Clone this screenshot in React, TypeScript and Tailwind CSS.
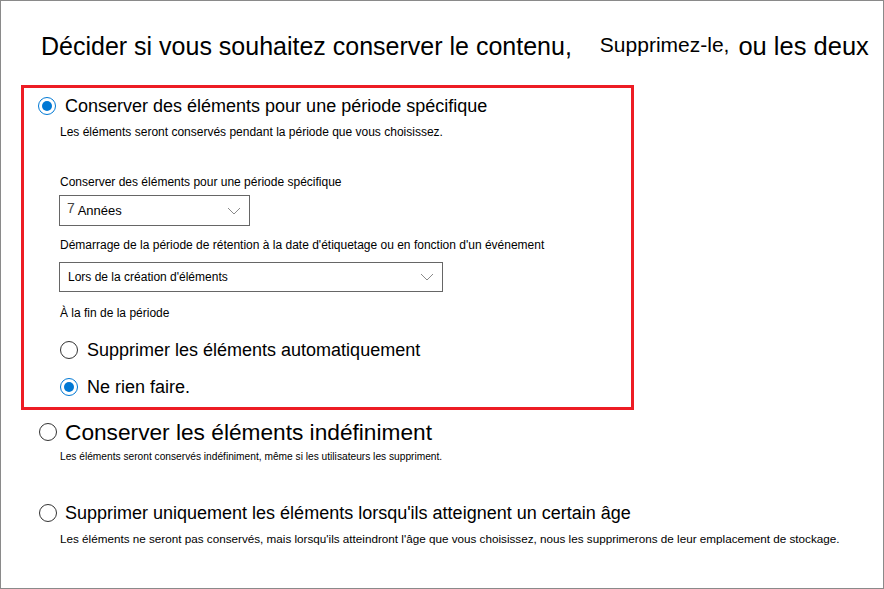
import React from 'react';

const font = { fontFamily: '"Liberation Sans", Arial, sans-serif' };

const Radio: React.FC = () => (
  <span className="flex h-[18px] w-[18px] shrink-0 items-center justify-center rounded-full border border-[#333] bg-white" />
);

const RadioChecked: React.FC = () => (
  <span className="flex h-[18px] w-[18px] shrink-0 items-center justify-center rounded-full border border-[#0078d4] bg-white">
    <span className="h-[10px] w-[10px] rounded-full bg-[#0078d4]" />
  </span>
);

const Chevron: React.FC = () => (
  <svg width="14" height="8" viewBox="0 0 14 8" fill="none" className="shrink-0">
    <path d="M1 1l6 6 6-6" stroke="#8a8a8a" strokeWidth="1" />
  </svg>
);

export default function App() {
  return (
    <div className="h-[589px] w-[884px] overflow-hidden border border-[#8a8a8a] bg-white text-black" style={font}>
      <div className="flex items-baseline pl-[40px] pt-[30px] text-[25px] leading-[30px]">
        <span>Décider si vous souhaitez conserver le contenu,</span>
        <span className="ml-[28px] -translate-y-[3px] text-[21px]">Supprimez-le,</span>
        <span className="ml-[9px] text-[25.5px]">ou les deux</span>
      </div>

      <div className="ml-[20px] mt-[22px] h-[325px] w-[613px] border-[3px] border-[#ed1c24] pl-[14px] pt-[6px]">
        <div className="flex items-center gap-[9px]">
          <RadioChecked />
          <span className="text-[18px] leading-[24px]">Conserver des éléments pour une période spécifique</span>
        </div>
        <p className="ml-[22px] mt-[7px] text-[12px] leading-[15px]">
          Les éléments seront conservés pendant la période que vous choisissez.
        </p>

        <p className="ml-[22px] mt-[35px] text-[12px] leading-[15px]">
          Conserver des éléments pour une période spécifique
        </p>
        <div className="ml-[21px] mt-[5px] flex h-[31px] w-[191px] items-center justify-between border border-[#666] pl-[7px] pr-[8px]">
          <span className="text-[13px]">
            <span className="relative -top-[2px] text-[14px] text-[#444]">7</span> Années
          </span>
          <Chevron />
        </div>

        <p className="ml-[22px] mt-[12px] text-[12px] leading-[15px]">
          Démarrage de la période de rétention à la date d'étiquetage ou en fonction d'un événement
        </p>
        <div className="ml-[21px] mt-[9px] flex h-[30px] w-[384px] items-center justify-between border border-[#666] pl-[8px] pr-[8px]">
          <span className="text-[12px]">Lors de la création d'éléments</span>
          <Chevron />
        </div>

        <p className="ml-[22px] mt-[14px] text-[12px] leading-[15px]">À la fin de la période</p>

        <div className="ml-[22px] mt-[18px] flex items-center gap-[9px]">
          <Radio />
          <span className="text-[18px] leading-[22px]">Supprimer les éléments automatiquement</span>
        </div>
        <div className="ml-[22px] mt-[15px] flex items-center gap-[9px]">
          <RadioChecked />
          <span className="text-[18px] leading-[22px]">Ne rien faire.</span>
        </div>
      </div>

      <div className="ml-[38px] mt-[9px] flex items-center gap-[8px]">
        <Radio />
        <span className="text-[22.7px] leading-[26px]">Conserver les éléments indéfiniment</span>
      </div>
      <p className="ml-[59px] mt-[5px] text-[10.2px] leading-[13px]">
        Les éléments seront conservés indéfiniment, même si les utilisateurs les suppriment.
      </p>

      <div className="ml-[38px] mt-[38px] flex items-center gap-[8px]">
        <Radio />
        <span className="text-[18px] leading-[24px]">Supprimer uniquement les éléments lorsqu'ils atteignent un certain âge</span>
      </div>
      <p className="ml-[59px] mt-[7px] text-[11.7px] leading-[14px]">
        Les éléments ne seront pas conservés, mais lorsqu'ils atteindront l'âge que vous choisissez, nous les supprimerons de leur emplacement de stockage.
      </p>
    </div>
  );
}
